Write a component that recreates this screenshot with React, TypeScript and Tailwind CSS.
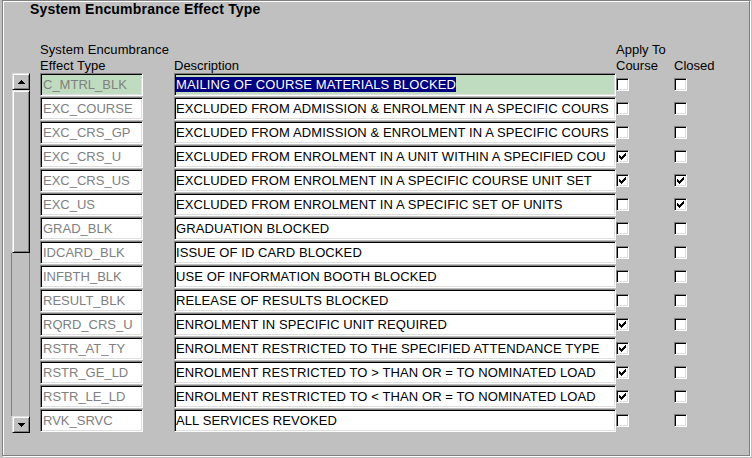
import React from 'react';

type Row = [string, string, boolean, boolean];

const rows: Row[] = [
  ['C_MTRL_BLK', 'MAILING OF COURSE MATERIALS BLOCKED', false, false],
  ['EXC_COURSE', 'EXCLUDED FROM ADMISSION & ENROLMENT IN A SPECIFIC COURS', false, false],
  ['EXC_CRS_GP', 'EXCLUDED FROM ADMISSION & ENROLMENT IN A SPECIFIC COURS', false, false],
  ['EXC_CRS_U', 'EXCLUDED FROM ENROLMENT IN A UNIT WITHIN A SPECIFIED COU', true, false],
  ['EXC_CRS_US', 'EXCLUDED FROM ENROLMENT IN A SPECIFIC COURSE UNIT SET', true, true],
  ['EXC_US', 'EXCLUDED FROM ENROLMENT IN A SPECIFIC SET OF UNITS', false, true],
  ['GRAD_BLK', 'GRADUATION BLOCKED', false, false],
  ['IDCARD_BLK', 'ISSUE OF ID CARD BLOCKED', false, false],
  ['INFBTH_BLK', 'USE OF INFORMATION BOOTH BLOCKED', false, false],
  ['RESULT_BLK', 'RELEASE OF RESULTS BLOCKED', false, false],
  ['RQRD_CRS_U', 'ENROLMENT IN SPECIFIC UNIT REQUIRED', true, false],
  ['RSTR_AT_TY', 'ENROLMENT RESTRICTED TO THE SPECIFIED ATTENDANCE TYPE', true, false],
  ['RSTR_GE_LD', 'ENROLMENT RESTRICTED TO > THAN OR = TO NOMINATED LOAD', true, false],
  ['RSTR_LE_LD', 'ENROLMENT RESTRICTED TO < THAN OR = TO NOMINATED LOAD', true, false],
  ['RVK_SRVC', 'ALL SERVICES REVOKED', false, false],
];

// sunken win95 edge: outer gray/white, inner black/light gray
const sunken =
  'border border-t-[#808080] border-l-[#808080] border-r-white border-b-white shadow-[inset_1px_1px_0_#000,inset_-1px_-1px_0_#dfdfdf]';
const raised =
  'border border-t-[#dfdfdf] border-l-[#dfdfdf] border-r-black border-b-black shadow-[inset_1px_1px_0_#fff,inset_-1px_-1px_0_#808080]';

function CheckBox({ checked }: { checked: boolean }) {
  return (
    <div className={`w-[13px] h-[13px] bg-white mt-[5px] ${sunken} flex items-center justify-center`}>
      {checked && (
        <svg width="7" height="7" viewBox="0 0 7 7" shapeRendering="crispEdges">
          <rect x="6" y="0" width="1" height="1" fill="#000" />
          <rect x="5" y="1" width="2" height="1" fill="#000" />
          <rect x="0" y="2" width="1" height="1" fill="#000" />
          <rect x="4" y="2" width="3" height="1" fill="#000" />
          <rect x="0" y="3" width="2" height="1" fill="#000" />
          <rect x="3" y="3" width="3" height="1" fill="#000" />
          <rect x="0" y="4" width="5" height="1" fill="#000" />
          <rect x="1" y="5" width="3" height="1" fill="#000" />
          <rect x="2" y="6" width="1" height="1" fill="#000" />
        </svg>
      )}
    </div>
  );
}

function Arrow({ up }: { up: boolean }) {
  return (
    <svg width="7" height="4" viewBox="0 0 7 4" shapeRendering="crispEdges">
      {up ? (
        <>
          <rect x="3" y="0" width="1" height="1" fill="#000" />
          <rect x="2" y="1" width="3" height="1" fill="#000" />
          <rect x="1" y="2" width="5" height="1" fill="#000" />
          <rect x="0" y="3" width="7" height="1" fill="#000" />
        </>
      ) : (
        <>
          <rect x="0" y="0" width="7" height="1" fill="#000" />
          <rect x="1" y="1" width="5" height="1" fill="#000" />
          <rect x="2" y="2" width="3" height="1" fill="#000" />
          <rect x="3" y="3" width="1" height="1" fill="#000" />
        </>
      )}
    </svg>
  );
}

export default function App() {
  return (
    <div className="w-[752px] h-[458px] bg-[#c0c0c0] overflow-hidden font-['Liberation_Sans',Arial,sans-serif] text-black">
      <div className="ml-[2px] w-[748px] h-[456px] border border-[#808080] shadow-[inset_1px_1px_0_#fff,1px_1px_0_#fff]">
        <div className="pl-[27px] text-[14px] leading-[16px] font-bold tracking-[0.2px]">System Encumbrance Effect Type</div>

        <div className="flex mt-[25px] pl-[37px] h-[31px] text-[13px] leading-[16px]">
          <div className="w-[134px] tracking-[0.1px]">
            <div>System Encumbrance</div>
            <div>Effect Type</div>
          </div>
          <div className="w-[442px] pt-[16px]">Description</div>
          <div className="w-[58px]">
            <div>Apply To</div>
            <div>Course</div>
          </div>
          <div className="pt-[16px]">Closed</div>
        </div>

        <div className="flex pl-[8px]">
          <div className="w-[18px] ml-px flex flex-col h-[360px]">
            <div className={`h-[17px] bg-[#c0c0c0] ${raised} flex items-center justify-center`}>
              <Arrow up />
            </div>
            <div className={`h-[163px] bg-[#c0c0c0] ${raised}`} />
            <div className="flex-1 -ml-px w-[19px] border-l border-r border-[#808080] bg-[#c0c0c0]" />
            <div className={`h-[17px] bg-[#c0c0c0] ${raised} flex items-center justify-center`}>
              <Arrow up={false} />
            </div>
          </div>

          <div className="ml-[10px] flex flex-col gap-px text-[13px]">
            {rows.map(([code, desc, apply, closed], i) => (
              <div key={code} className="flex h-[23px]">
                <div
                  className={`w-[103px] h-[23px] ${sunken} ${i === 0 ? 'bg-[#c0dcc0]' : 'bg-white'} flex items-center pl-[2px] text-[#808080] leading-[15px] whitespace-nowrap overflow-hidden`}
                >
                  {code}
                </div>
                <div
                  className={`ml-[31px] w-[442px] h-[23px] ${sunken} ${i === 0 ? 'bg-[#c0dcc0]' : 'bg-white'} flex items-center pl-px leading-[15px] tracking-[0.1px] whitespace-nowrap overflow-hidden`}
                >
                  {i === 0 ? <span className="bg-[#000080] text-white">{desc}</span> : desc}
                </div>
                <div className="w-[58px]">
                  <CheckBox checked={apply} />
                </div>
                <div>
                  <CheckBox checked={closed} />
                </div>
              </div>
            ))}
          </div>
        </div>
      </div>
    </div>
  );
}
